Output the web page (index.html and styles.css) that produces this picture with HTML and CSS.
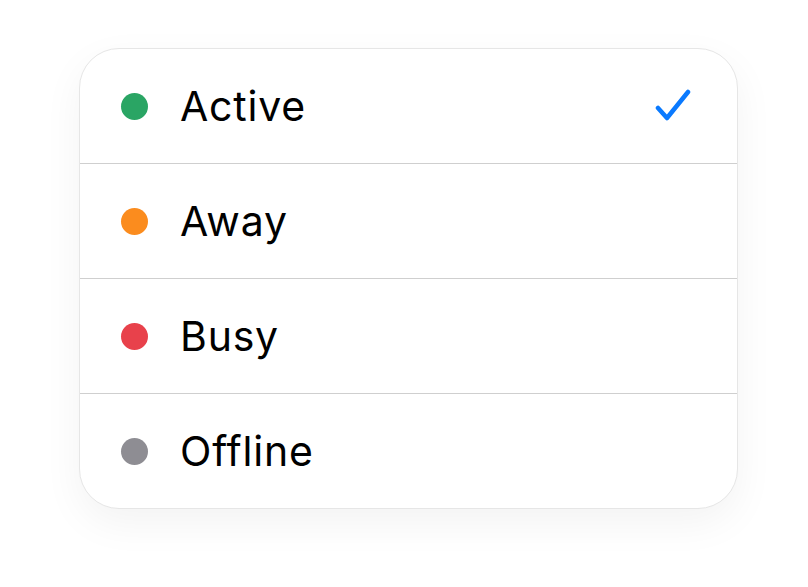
FILE: index.html
```html
<!DOCTYPE html>
<html>
<head>
<meta charset="utf-8">
<link rel="stylesheet" href="styles.css">
</head>
<body>
<div class="page">
  <ul class="menu">
    <li class="item">
      <span class="dot dot-green"></span>
      <span class="label">Active</span>
      <svg class="check" width="36" height="34" viewBox="0 0 36 34"><path d="M3 19 L12 29 L33 3" fill="none" stroke="#0a7aff" stroke-width="4.5" stroke-linecap="round" stroke-linejoin="round"/></svg>
    </li>
    <li class="item">
      <span class="dot dot-orange"></span>
      <span class="label">Away</span>
    </li>
    <li class="item">
      <span class="dot dot-red"></span>
      <span class="label">Busy</span>
    </li>
    <li class="item">
      <span class="dot dot-gray"></span>
      <span class="label">Offline</span>
    </li>
  </ul>
</div>
</body>
</html>
```
FILE: styles.css
```css
html, body {
  margin: 0;
  padding: 0;
  background: #ffffff;
}
.page {
  box-sizing: border-box;
  min-height: 587px;
  padding: 48px 0 60px 79px;
}
.menu {
  list-style: none;
  margin: 0;
  padding: 0;
  width: 657px;
  background: #ffffff;
  border: 1.5px solid #e6e6e6;
  border-radius: 40px;
  box-shadow: 0 14px 40px rgba(0, 0, 0, 0.05);
  overflow: hidden;
  font-family: Inter, "Liberation Sans", sans-serif;
}
.item {
  display: flex;
  align-items: center;
  height: 114px;
  padding: 0 46px 0 41px;
  border-bottom: 1px solid #cfcfcf;
}
.item:last-child {
  border-bottom: none;
}
.dot {
  width: 27px;
  height: 27px;
  border-radius: 50%;
  flex: none;
  margin-right: 32px;
}
.dot-green { background: #2aa564; }
.dot-orange { background: #fb8c1e; }
.dot-red { background: #e8414b; }
.dot-gray { background: #8e8d93; }
.label {
  flex: 1;
  font-size: 41px;
  color: #000;
  letter-spacing: 0.8px;
}
.check {
  flex: none;
}
```
